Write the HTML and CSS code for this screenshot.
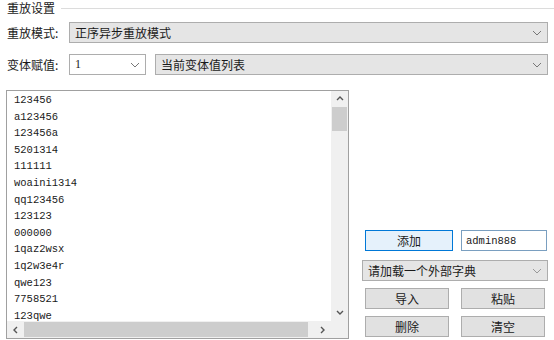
FILE: index.html
```html
<!DOCTYPE html>
<html lang="zh-CN">
<head>
    <meta charset="UTF-8">
    <title>重放设置</title>
    <link rel="stylesheet" href="styles.css">
</head>
<body>
    <div class="group">
        <div class="group-title"><span>重放设置</span><i class="rule"></i></div>
        <div class="row">
            <label>重放模式:</label>
            <div class="combo grow">正序异步重放模式
                <svg class="chev" width="10" height="6" viewBox="0 0 10 6"><path d="M1 1l4 4 4-4" fill="none" stroke="#777" stroke-width="1"/></svg>
            </div>
        </div>
        <div class="row">
            <label>变体赋值:</label>
            <div class="combo edit small">1
                <svg class="chev" width="10" height="6" viewBox="0 0 10 6"><path d="M1 1l4 4 4-4" fill="none" stroke="#777" stroke-width="1"/></svg>
            </div>
            <div class="combo grow">当前变体值列表
                <svg class="chev" width="10" height="6" viewBox="0 0 10 6"><path d="M1 1l4 4 4-4" fill="none" stroke="#777" stroke-width="1"/></svg>
            </div>
        </div>
    </div>

    <div class="main">
        <div class="listbox">
            <ul class="items">
                <li>123456</li>
                <li>a123456</li>
                <li>123456a</li>
                <li>5201314</li>
                <li>111111</li>
                <li>woaini1314</li>
                <li>qq123456</li>
                <li>123123</li>
                <li>000000</li>
                <li>1qaz2wsx</li>
                <li>1q2w3e4r</li>
                <li>qwe123</li>
                <li>7758521</li>
                <li>123qwe</li>
            </ul>
            <div class="vscroll">
                <svg class="arrow" width="8" height="5" viewBox="0 0 8 5"><path d="M1 4l3-3 3 3" fill="none" stroke="#555" stroke-width="1.4"/></svg>
                <div class="vthumb"></div>
                <svg class="arrow down" width="8" height="5" viewBox="0 0 8 5"><path d="M1 1l3 3 3-3" fill="none" stroke="#555" stroke-width="1.4"/></svg>
            </div>
            <div class="hscroll">
                <svg class="arrow" width="5" height="8" viewBox="0 0 5 8"><path d="M4 1L1 4l3 3" fill="none" stroke="#555" stroke-width="1.4"/></svg>
                <div class="hthumb"></div>
                <svg class="arrow" width="5" height="8" viewBox="0 0 5 8"><path d="M1 1l3 3-3 3" fill="none" stroke="#555" stroke-width="1.4"/></svg>
            </div>
            <div class="corner"></div>
        </div>

        <div class="side">
            <div class="pair">
                <button class="btn primary">添加</button>
                <input class="text" type="text" value="admin888">
            </div>
            <div class="combo dict">请加载一个外部字典
                <svg class="chev" width="10" height="6" viewBox="0 0 10 6"><path d="M1 1l4 4 4-4" fill="none" stroke="#999" stroke-width="1"/></svg>
            </div>
            <div class="pair btns">
                <button class="btn">导入</button>
                <button class="btn">粘贴</button>
            </div>
            <div class="pair btns">
                <button class="btn">删除</button>
                <button class="btn">清空</button>
            </div>
        </div>
    </div>
</body>
</html>
```

FILE: styles.css
```css
body {
    margin: 0;
    background: #fff;
    color: #1a1a1a;
    font-family: "Noto Sans CJK SC", "Noto Sans", sans-serif;
    font-size: 12px;
    width: 554px;
    height: 340px;
    overflow: hidden;
}

.group {
    padding: 0 6px 0 7px;
}

.group-title {
    display: flex;
    align-items: center;
    height: 16px;
    margin-right: -6px;
}

.group-title span {
    line-height: 16px;
    margin-right: 6px;
}

.rule {
    flex: 1;
    height: 1px;
    background: #dcdcdc;
}

.row {
    display: flex;
    align-items: center;
    margin-top: 6px;
}

.row + .row {
    margin-top: 11px;
}

.row label {
    width: 62px;
}

.combo {
    position: relative;
    box-sizing: border-box;
    height: 21px;
    line-height: 19px;
    padding-left: 5px;
    background: #e5e5e5;
    border: 1px solid #adadad;
}

.combo.grow {
    flex: 1;
    margin-right: 0;
}

.combo.small {
    width: 77px;
    margin-right: 9px;
    background: #fff;
    font-family: "Liberation Serif", serif;
}

.chev {
    position: absolute;
    right: 5px;
    top: 7px;
}

.main {
    display: flex;
    margin-top: 15px;
    padding-left: 6px;
}

.listbox {
    display: grid;
    grid-template-columns: 1fr 17px;
    grid-template-rows: 1fr 17px;
    box-sizing: border-box;
    width: 343px;
    height: 249px;
    border: 1px solid #a0a0a0;
}

.items {
    list-style: none;
    margin: 0;
    padding: 1px 0 0 7px;
    overflow: hidden;
    font-family: "Liberation Mono", monospace;
    font-size: 10.5px;
    line-height: 16.6px;
}

.vscroll {
    display: flex;
    flex-direction: column;
    align-items: center;
    background: #f0f0f0;
}

.vscroll .arrow {
    margin: 5px 0 6px;
}

.vscroll .arrow.down {
    margin: auto 0 6px;
}

.vthumb {
    width: 15px;
    height: 24px;
    background: #cdcdcd;
}

.hscroll {
    display: flex;
    align-items: center;
    padding: 0 6px;
    gap: 6px;
    background: #f0f0f0;
}

.hthumb {
    flex: 1;
    height: 15px;
    margin-right: 6px;
    background: #cdcdcd;
}

.corner {
    background: #f0f0f0;
}

.side {
    display: flex;
    flex-direction: column;
    justify-content: flex-end;
    gap: 7px;
    width: 186px;
    height: 247px;
    margin-left: 13px;
}

.pair {
    display: flex;
    align-items: center;
    justify-content: space-between;
    padding: 0 1px 0 3px;
}

.pair.btns {
    padding: 0 3px 0 3px;
}

.btn {
    box-sizing: border-box;
    width: 84px;
    height: 21px;
    padding: 0;
    background: #e1e1e1;
    border: 1px solid #adadad;
    font-family: inherit;
    font-size: 12px;
    color: #1a1a1a;
}

.btn.primary {
    width: 88px;
    background: #e5f1fb;
    border-color: #0078d7;
}

.text {
    box-sizing: border-box;
    width: 86px;
    height: 21px;
    padding: 0 4px;
    border: 1px solid #7a9fc0;
    font-family: "Liberation Mono", monospace;
    font-size: 10.5px;
    color: #1a1a1a;
}

.combo.dict {
    margin-top: 2px;
}
```
